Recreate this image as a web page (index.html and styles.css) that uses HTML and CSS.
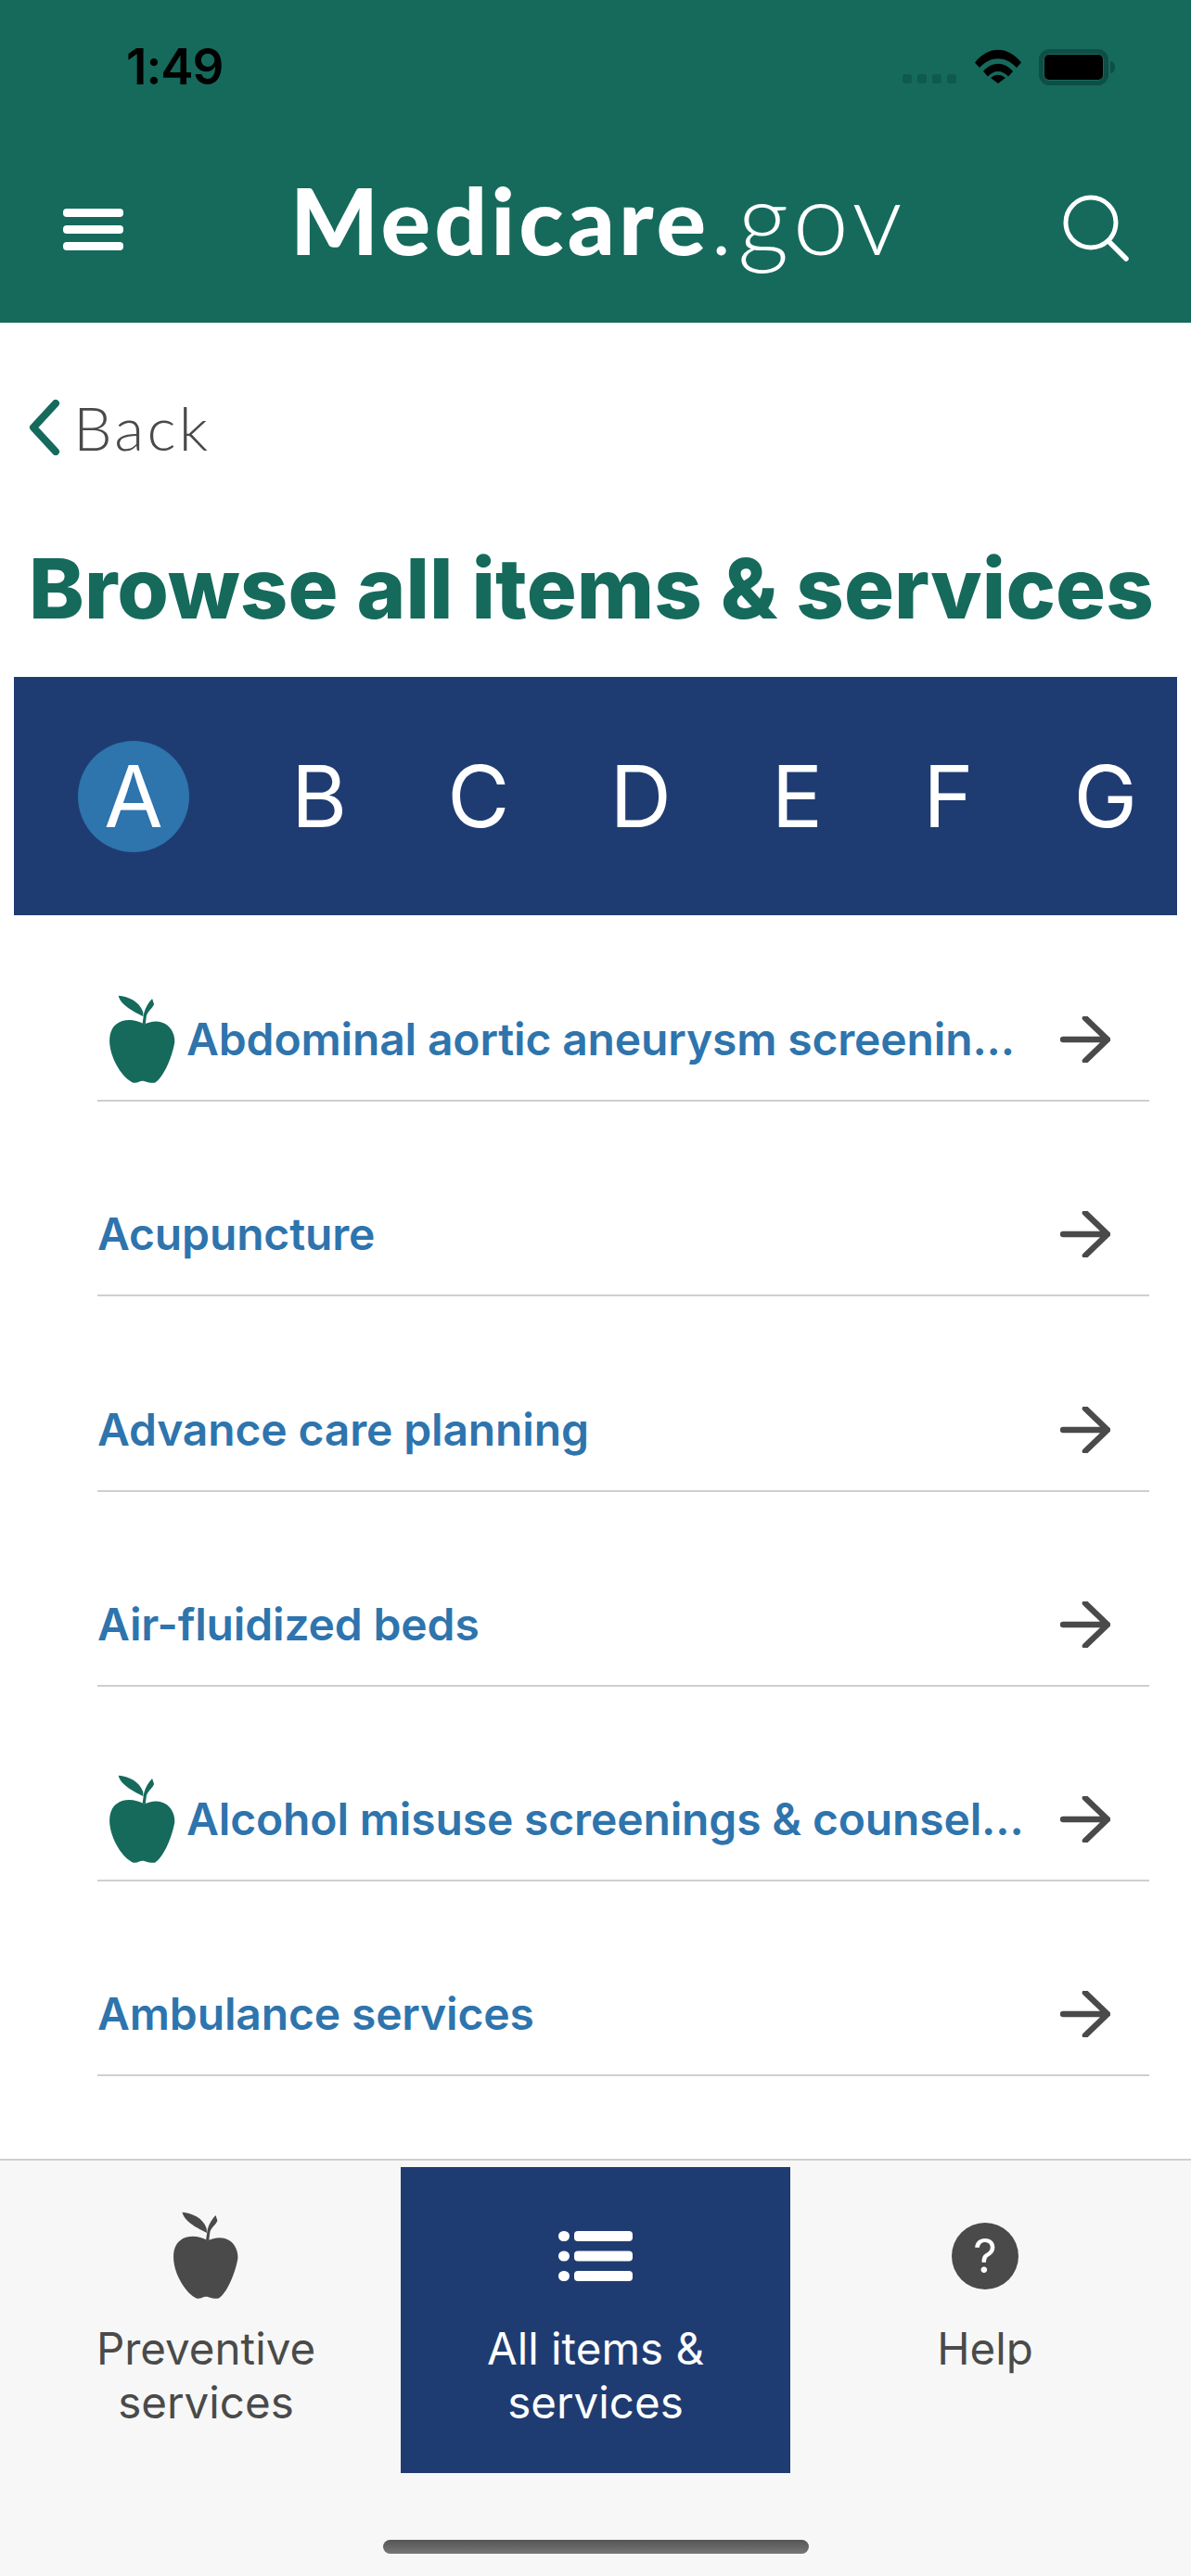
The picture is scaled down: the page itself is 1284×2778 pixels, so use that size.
FILE: index.html
```html
<!DOCTYPE html>
<html lang="en">
<head>
<meta charset="utf-8">
<title>Medicare.gov</title>
<link rel="stylesheet" href="styles.css">
</head>
<body>
<svg class="defs" width="0" height="0" aria-hidden="true">
  <symbol id="apple" viewBox="80 70 220 290">
    <path d="M195 165C170 150 130 145 105 165C85 180 80 210 85 240C92 285 125 340 160 356C175 358 180 350 190 350C200 350 210 358 230 356C255 345 285 280 295 225C297 195 280 165 250 158C230 153 210 160 195 165Z"/>
    <path d="M112 72C145 75 180 90 192 125L193 140C165 125 120 105 112 72Z"/>
    <path d="M190 165L195 130C200 110 210 95 222 82L228 100C222 115 205 125 203 140L200 165Z"/>
  </symbol>
  <symbol id="arrow" viewBox="0 0 54 50">
    <path d="M3 25H51M27 2L51 25L27 48" fill="none" stroke="currentColor" stroke-width="6.500" stroke-linecap="round" stroke-linejoin="round"/>
  </symbol>
</svg>
<div class="page">
  <header class="header">
    <div class="status">
      <span class="time">1:49</span>
      <div class="status-icons">
        <div class="signal"><i></i><i></i><i></i><i></i></div>
        <svg class="wifi" viewBox="0 0 50 37"><path d="M0 14.500C14 -4 36 -4 50 14.500L45 20C33 7 17 7 5 20Z"/><path d="M9 24C18 13 32 13 41 24L36 29.500C30 22 20 22 14 29.500Z"/><path d="M17 31C22 26.500 28 26.500 33 31L25 37Z"/></svg>
        <svg class="battery" viewBox="0 0 82 39"><rect x="2.500" y="2.500" width="70" height="34" rx="9" fill="none" stroke="#0e4f45" stroke-width="5"/><rect x="6" y="6" width="63" height="27" rx="5" fill="#000"/><path d="M77 13C80 13 82 16 82 19.500C82 23 80 26 77 26Z" fill="#0e4f45"/></svg>
      </div>
    </div>
    <div class="nav">
      <div class="burger"><i></i><i></i><i></i></div>
      <div class="logo"><b>Medicare</b><span>.gov</span></div>
      <svg class="search" viewBox="0 0 72 74"><circle cx="31" cy="31" r="27" fill="none" stroke="#fff" stroke-width="5"/><path d="M50 51L69 70" stroke="#fff" stroke-width="5.500" stroke-linecap="round"/></svg>
    </div>
  </header>

  <main class="main">
    <div class="back">
      <svg class="chevron" viewBox="0 0 34 60"><path d="M29 4L5 30L29 56" fill="none" stroke="#156a5c" stroke-width="8" stroke-linecap="round" stroke-linejoin="round"/></svg>
      <span>Back</span>
    </div>
    <h1 class="title">Browse all items &amp; services</h1>
    <nav class="alpha">
      <span class="letter active">A</span>
      <span class="letter">B</span>
      <span class="letter">C</span>
      <span class="letter">D</span>
      <span class="letter">E</span>
      <span class="letter">F</span>
      <span class="letter">G</span>
    </nav>
    <ul class="list">
      <li class="row"><svg class="apple green"><use href="#apple"/></svg><span class="row-text">Abdominal aortic aneurysm screenin...</span><svg class="arrow"><use href="#arrow"/></svg></li>
      <li class="row"><span class="row-text">Acupuncture</span><svg class="arrow"><use href="#arrow"/></svg></li>
      <li class="row"><span class="row-text">Advance care planning</span><svg class="arrow"><use href="#arrow"/></svg></li>
      <li class="row"><span class="row-text">Air-fluidized beds</span><svg class="arrow"><use href="#arrow"/></svg></li>
      <li class="row"><svg class="apple green"><use href="#apple"/></svg><span class="row-text">Alcohol misuse screenings &amp; counsel...</span><svg class="arrow"><use href="#arrow"/></svg></li>
      <li class="row"><span class="row-text">Ambulance services</span><svg class="arrow"><use href="#arrow"/></svg></li>
    </ul>
  </main>

  <footer class="tabbar">
    <div class="tabs">
      <div class="tab">
        <div class="tab-icon"><svg class="apple gray"><use href="#apple"/></svg></div>
        <div class="tab-label">Preventive<br>services</div>
      </div>
      <div class="tab active">
        <div class="tab-icon">
          <svg class="listicon" viewBox="0 0 80 54"><g fill="#fff"><rect x="0" y="0" width="12" height="11" rx="5.500"/><rect x="17" y="0" width="63" height="11" rx="4"/><rect x="0" y="21.500" width="12" height="11" rx="5.500"/><rect x="17" y="21.500" width="63" height="11" rx="4"/><rect x="0" y="43" width="12" height="11" rx="5.500"/><rect x="17" y="43" width="63" height="11" rx="4"/></g></svg>
        </div>
        <div class="tab-label">All items &amp;<br>services</div>
      </div>
      <div class="tab">
        <div class="tab-icon"><div class="help">?</div></div>
        <div class="tab-label">Help</div>
      </div>
    </div>
    <div class="home-bar"></div>
  </footer>
</div>
</body>
</html>
```
FILE: styles.css
```css
* { box-sizing: border-box; }
html, body { margin: 0; padding: 0; background: #fff; }
body { font-family: Inter, "Liberation Sans", sans-serif; }
.defs { position: absolute; }
.page { width: 1284px; height: 2778px; display: flex; flex-direction: column; overflow: hidden; }

.header { height: 348px; background: #156a5c; display: flex; flex-direction: column; }
.status { height: 150px; padding: 50px 82px 0 136px; display: flex; justify-content: space-between; align-items: flex-start; }
.time { font-size: 53px; line-height: 44px; font-weight: 600; color: #000; letter-spacing: -1px; }
.status-icons { display: flex; align-items: flex-start; padding-top: 3px; }
.signal { display: flex; gap: 6px; margin-top: 27px; margin-right: 20px; }
.signal i { width: 10px; height: 10px; border-radius: 3px; background: #0f5a4e; }
.wifi { width: 50px; height: 37px; fill: #000; margin-right: 19px; }
.battery { width: 82px; height: 39px; }

.nav { display: flex; align-items: flex-start; padding: 0 67px 0 68px; }
.burger { width: 65px; display: flex; flex-direction: column; gap: 9.500px; margin-top: 75px; }
.burger i { height: 8.500px; border-radius: 4px; background: #fff; }
.logo { flex: 1; padding-left: 180px; margin-top: 28px; font-family: Lato, sans-serif; font-size: 100px; line-height: 110px; color: #fff; white-space: nowrap; }
.logo b { font-weight: 900; letter-spacing: 4px; }
.logo span { font-size: 108px; font-weight: 300; letter-spacing: 5px; }
.search { width: 72px; height: 74px; margin-top: 59px; flex: none; }

.main { flex: 1; display: flex; flex-direction: column; }
.back { display: flex; align-items: center; gap: 14px; padding: 79px 0 0 31px; height: 146px; }
.chevron { width: 34px; height: 60px; }
.back span { font-family: Lato, sans-serif; font-weight: 300; font-size: 66px; line-height: 64px; color: #4a4a4a; letter-spacing: 3.200px; }
.title { margin: 0; padding: 91px 0 0 31px; height: 236px; display: flex; align-items: flex-start; font-size: 90px; line-height: 100px; font-weight: 800; color: #156a5c; white-space: nowrap; letter-spacing: 0.100px; }

.alpha { margin: 0 15px; height: 257px; background: #1f3c72; display: flex; align-items: center; padding-left: 69px; gap: 108px; }
.letter { font-size: 92px; line-height: 120px; color: #fff; }
.letter.active { width: 120px; height: 120px; border-radius: 50%; background: #2e74ad; text-align: center; margin-right: 2px; }

.list { list-style: none; margin: -9px 45px 0 105px; padding: 0; }
.row { height: 210.200px; padding: 0 42px 36px 0; border-bottom: 2px solid #cfcfcf; display: flex; align-items: flex-end; gap: 11px; }
.row-text { flex: 1; font-size: 48px; line-height: 58px; font-weight: 600; color: #2e74ad; white-space: nowrap; letter-spacing: -0.150px; }
.apple { display: block; width: 73px; height: 96px; flex: none; }
.green { fill: #156a5c; margin: 0 0 -19px 12px; }
.gray { fill: #4a4a4a; }
.arrow { width: 54px; height: 50px; flex: none; color: #4a4a4a; margin-bottom: 4px; }

.tabbar { height: 450px; background: #f7f7f7; border-top: 2px solid #cfcfcf; display: flex; flex-direction: column; align-items: center; }
.tabs { width: 1260px; height: 338px; margin-top: 7px; display: grid; grid-template-columns: repeat(3, 420px); }
.tab { height: 330px; display: flex; flex-direction: column; align-items: center; color: #4a4a4a; }
.tab.active { background: #1f3c72; color: #fff; }
.tab-icon { height: 167px; padding-top: 48px; display: flex; align-items: flex-start; justify-content: center; }
.tab-icon .apple { width: 72px; height: 95px; }
.listicon { width: 80px; height: 54px; margin-top: 21px; }
.help { width: 72px; height: 72px; margin-top: 12px; border-radius: 50%; background: #4a4a4a; color: #fff; font-size: 50px; line-height: 72px; text-align: center; }
.tab-label { font-size: 47.500px; line-height: 58px; text-align: center; }
.home-bar { width: 459px; height: 15px; margin-top: 64px; border-radius: 8px; background: linear-gradient(#555, #777); }
```
